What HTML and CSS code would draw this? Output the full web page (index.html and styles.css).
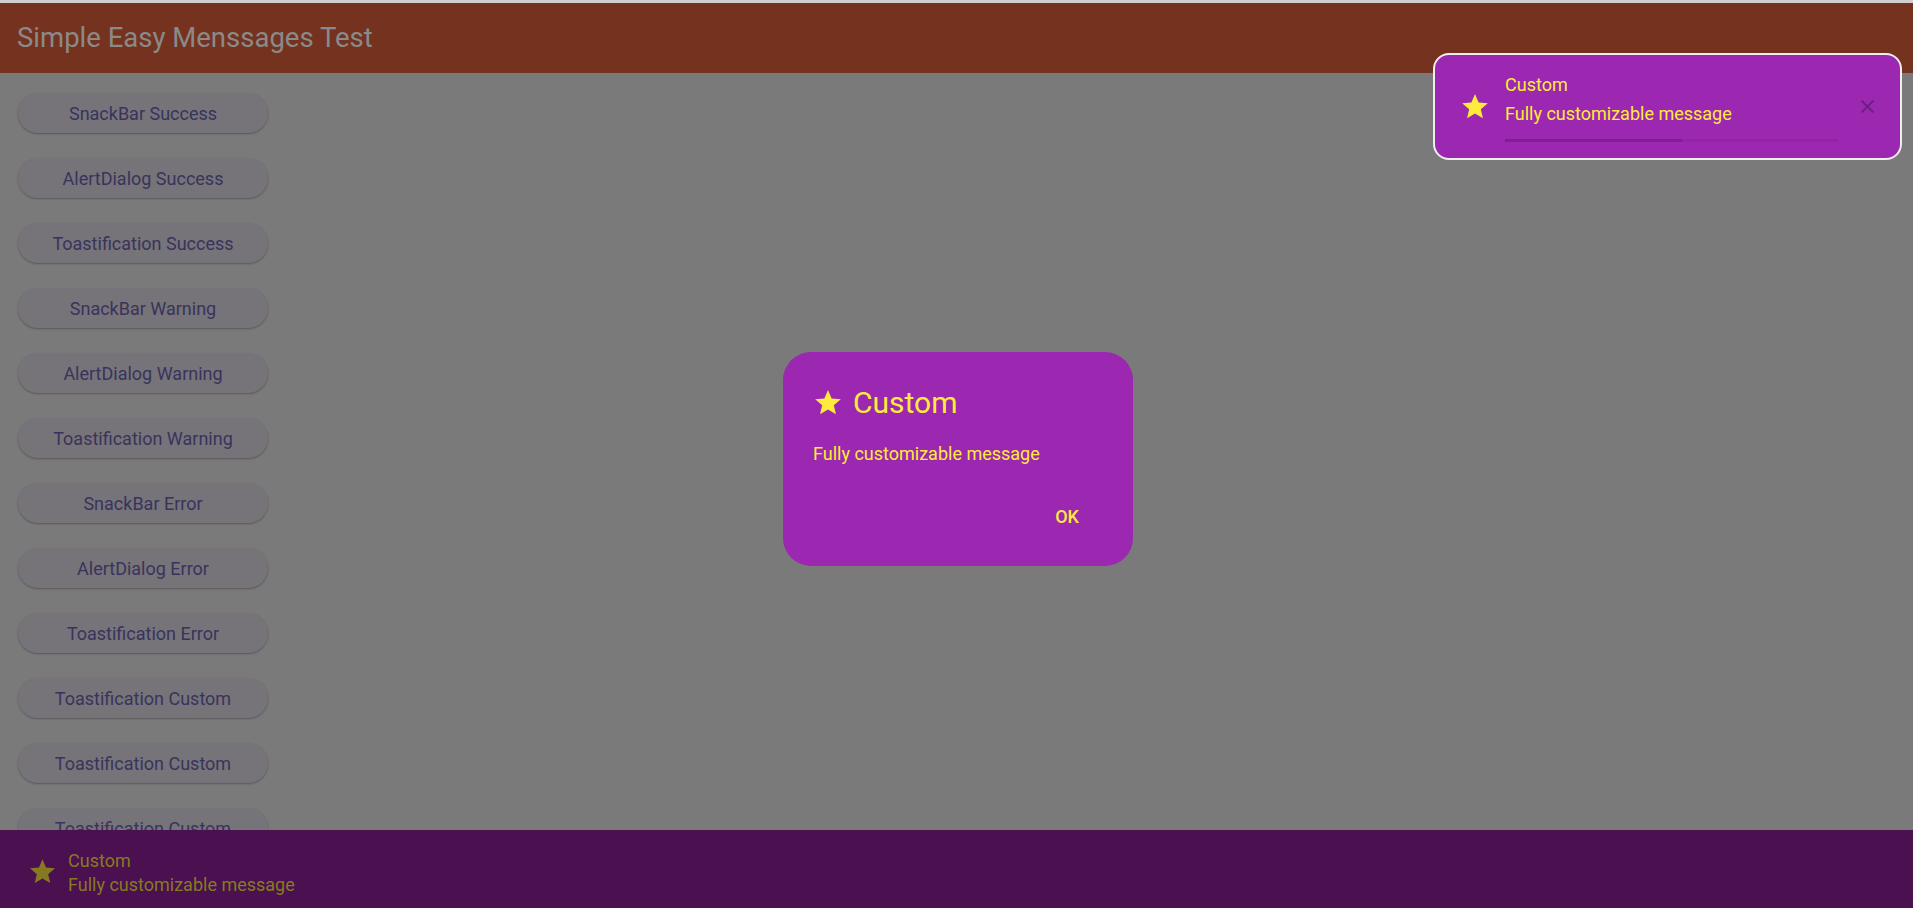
FILE: index.html
```html
<!DOCTYPE html>
<html>
<head>
<meta charset="utf-8">
<link rel="stylesheet" href="styles.css">
</head>
<body>
<div class="page">
  <div class="strip"></div>
  <header class="appbar"><span class="app-title">Simple Easy Menssages Test</span></header>
  <main class="buttons">
    <div class="btn">SnackBar Success</div>
    <div class="btn">AlertDialog Success</div>
    <div class="btn">Toastification Success</div>
    <div class="btn">SnackBar Warning</div>
    <div class="btn">AlertDialog Warning</div>
    <div class="btn">Toastification Warning</div>
    <div class="btn">SnackBar Error</div>
    <div class="btn">AlertDialog Error</div>
    <div class="btn">Toastification Error</div>
    <div class="btn">Toastification Custom</div>
    <div class="btn">Toastification Custom</div>
    <div class="btn">Toastification Custom</div>
  </main>

  <div class="snackbar">
    <svg class="star snack-star" viewBox="2 2 20 19.5"><path d="M12 17.27L18.18 21l-1.64-7.03L22 9.24l-7.19-.61L12 2 9.19 8.63 2 9.24l5.46 4.73L5.82 21z"/></svg>
    <div class="snack-text">
      <div class="line">Custom</div>
      <div class="line">Fully customizable message</div>
    </div>
  </div>

  <div class="dialog">
    <div class="dialog-title">
      <svg class="star dlg-star" viewBox="2 2 20 19.5"><path d="M12 17.27L18.18 21l-1.64-7.03L22 9.24l-7.19-.61L12 2 9.19 8.63 2 9.24l5.46 4.73L5.82 21z"/></svg>
      <span>Custom</span>
    </div>
    <div class="dialog-body">Fully customizable message</div>
    <div class="dialog-actions"><span class="ok">OK</span></div>
  </div>

  <div class="toast">
    <svg class="star toast-star" viewBox="2 2 20 19.5"><path d="M12 17.27L18.18 21l-1.64-7.03L22 9.24l-7.19-.61L12 2 9.19 8.63 2 9.24l5.46 4.73L5.82 21z"/></svg>
    <div class="toast-text">
      <div class="line">Custom</div>
      <div class="line line2">Fully customizable message</div>
      <div class="progress"><div class="progress-fill"></div></div>
    </div>
    <svg class="close" viewBox="5 5 14 14"><path d="M19 6.41L17.59 5 12 10.59 6.41 5 5 6.41 10.59 12 5 17.59 6.41 19 12 13.41 17.59 19 19 17.59 13.41 12z"/></svg>
  </div>
</div>
</body>
</html>
```
FILE: styles.css
```css
html, body {
  margin: 0;
  padding: 0;
}
body {
  width: 1913px;
  height: 908px;
  overflow: hidden;
  background: #7a7a7a;
  font-family: Roboto, "Liberation Sans", sans-serif;
}
.page {
  position: relative;
  width: 1913px;
  height: 908px;
  overflow: hidden;
  display: flex;
  flex-direction: column;
}
.strip {
  height: 3px;
  background: #cfcfcf;
  flex: none;
}
.appbar {
  height: 70px;
  flex: none;
  background: #75331f;
  display: flex;
  align-items: center;
  padding-left: 17px;
}
.app-title {
  font-size: 27.5px;
  color: #8a8a8a;
  line-height: 1;
  position: relative;
  top: 0;
}
.buttons {
  display: flex;
  flex-direction: column;
  gap: 25px;
  padding: 20px 0 0 18px;
}
.btn {
  width: 250px;
  height: 40px;
  box-sizing: border-box;
  border-radius: 20px;
  background: #767379;
  box-shadow: 0 1px 2px rgba(0, 0, 0, 0.28);
  color: #39335c;
  font-size: 18px;
  display: flex;
  align-items: center;
  justify-content: center;
  flex: none;
}
.star path {
  fill: #ffeb3b;
}
.snackbar {
  position: absolute;
  left: 0;
  right: 0;
  bottom: 0;
  height: 78px;
  background: #4a1050;
  display: flex;
  align-items: center;
  padding-left: 30px;
}
.snack-star {
  width: 25px;
  height: 25px;
  margin-right: 13px;
  position: relative;
  top: 2px;
}
.snack-star path {
  fill: #857a1f;
}
.snack-text {
  color: #877b20;
  font-size: 18px;
  line-height: 24px;
  padding-top: 7px;
}
.dialog {
  position: absolute;
  left: 783px;
  top: 352px;
  width: 350px;
  height: 214px;
  box-sizing: border-box;
  background: #9c27b0;
  border-radius: 28px;
  padding: 32px 30px 0 30px;
  display: flex;
  flex-direction: column;
  color: #ffeb3b;
}
.dialog-title {
  display: flex;
  align-items: center;
  height: 36px;
  font-size: 30px;
}
.dlg-star {
  width: 26px;
  height: 25px;
  margin-left: 2px;
  margin-right: 12px;
}
.dialog-body {
  margin-top: 22px;
  font-size: 18px;
  line-height: 24px;
}
.dialog-actions {
  margin-top: 39px;
  display: flex;
  justify-content: flex-end;
  padding-right: 24px;
}
.ok {
  font-size: 18px;
  line-height: 24px;
  font-weight: 500;
}
.toast {
  position: absolute;
  left: 1433px;
  top: 53px;
  width: 469px;
  height: 107px;
  box-sizing: border-box;
  border: 2px solid #efefef;
  border-radius: 16px;
  background: #9c27b0;
  display: flex;
  align-items: center;
  padding-left: 27px;
}
.toast-star {
  width: 26px;
  height: 25px;
  margin-right: 17px;
}
.toast-text {
  width: 333px;
  display: flex;
  flex-direction: column;
  color: #ffeb3b;
  font-size: 18px;
  line-height: 24px;
  padding-top: 1px;
}
.line2 {
  margin-top: 5px;
}
.progress {
  margin-top: 13px;
  height: 3px;
  background: #9324a7;
}
.progress-fill {
  width: 177px;
  height: 3px;
  background: #7f1f96;
}
.close {
  width: 13px;
  height: 13px;
  margin-left: 23px;
}
.close path {
  fill: #6e1c83;
}
```
